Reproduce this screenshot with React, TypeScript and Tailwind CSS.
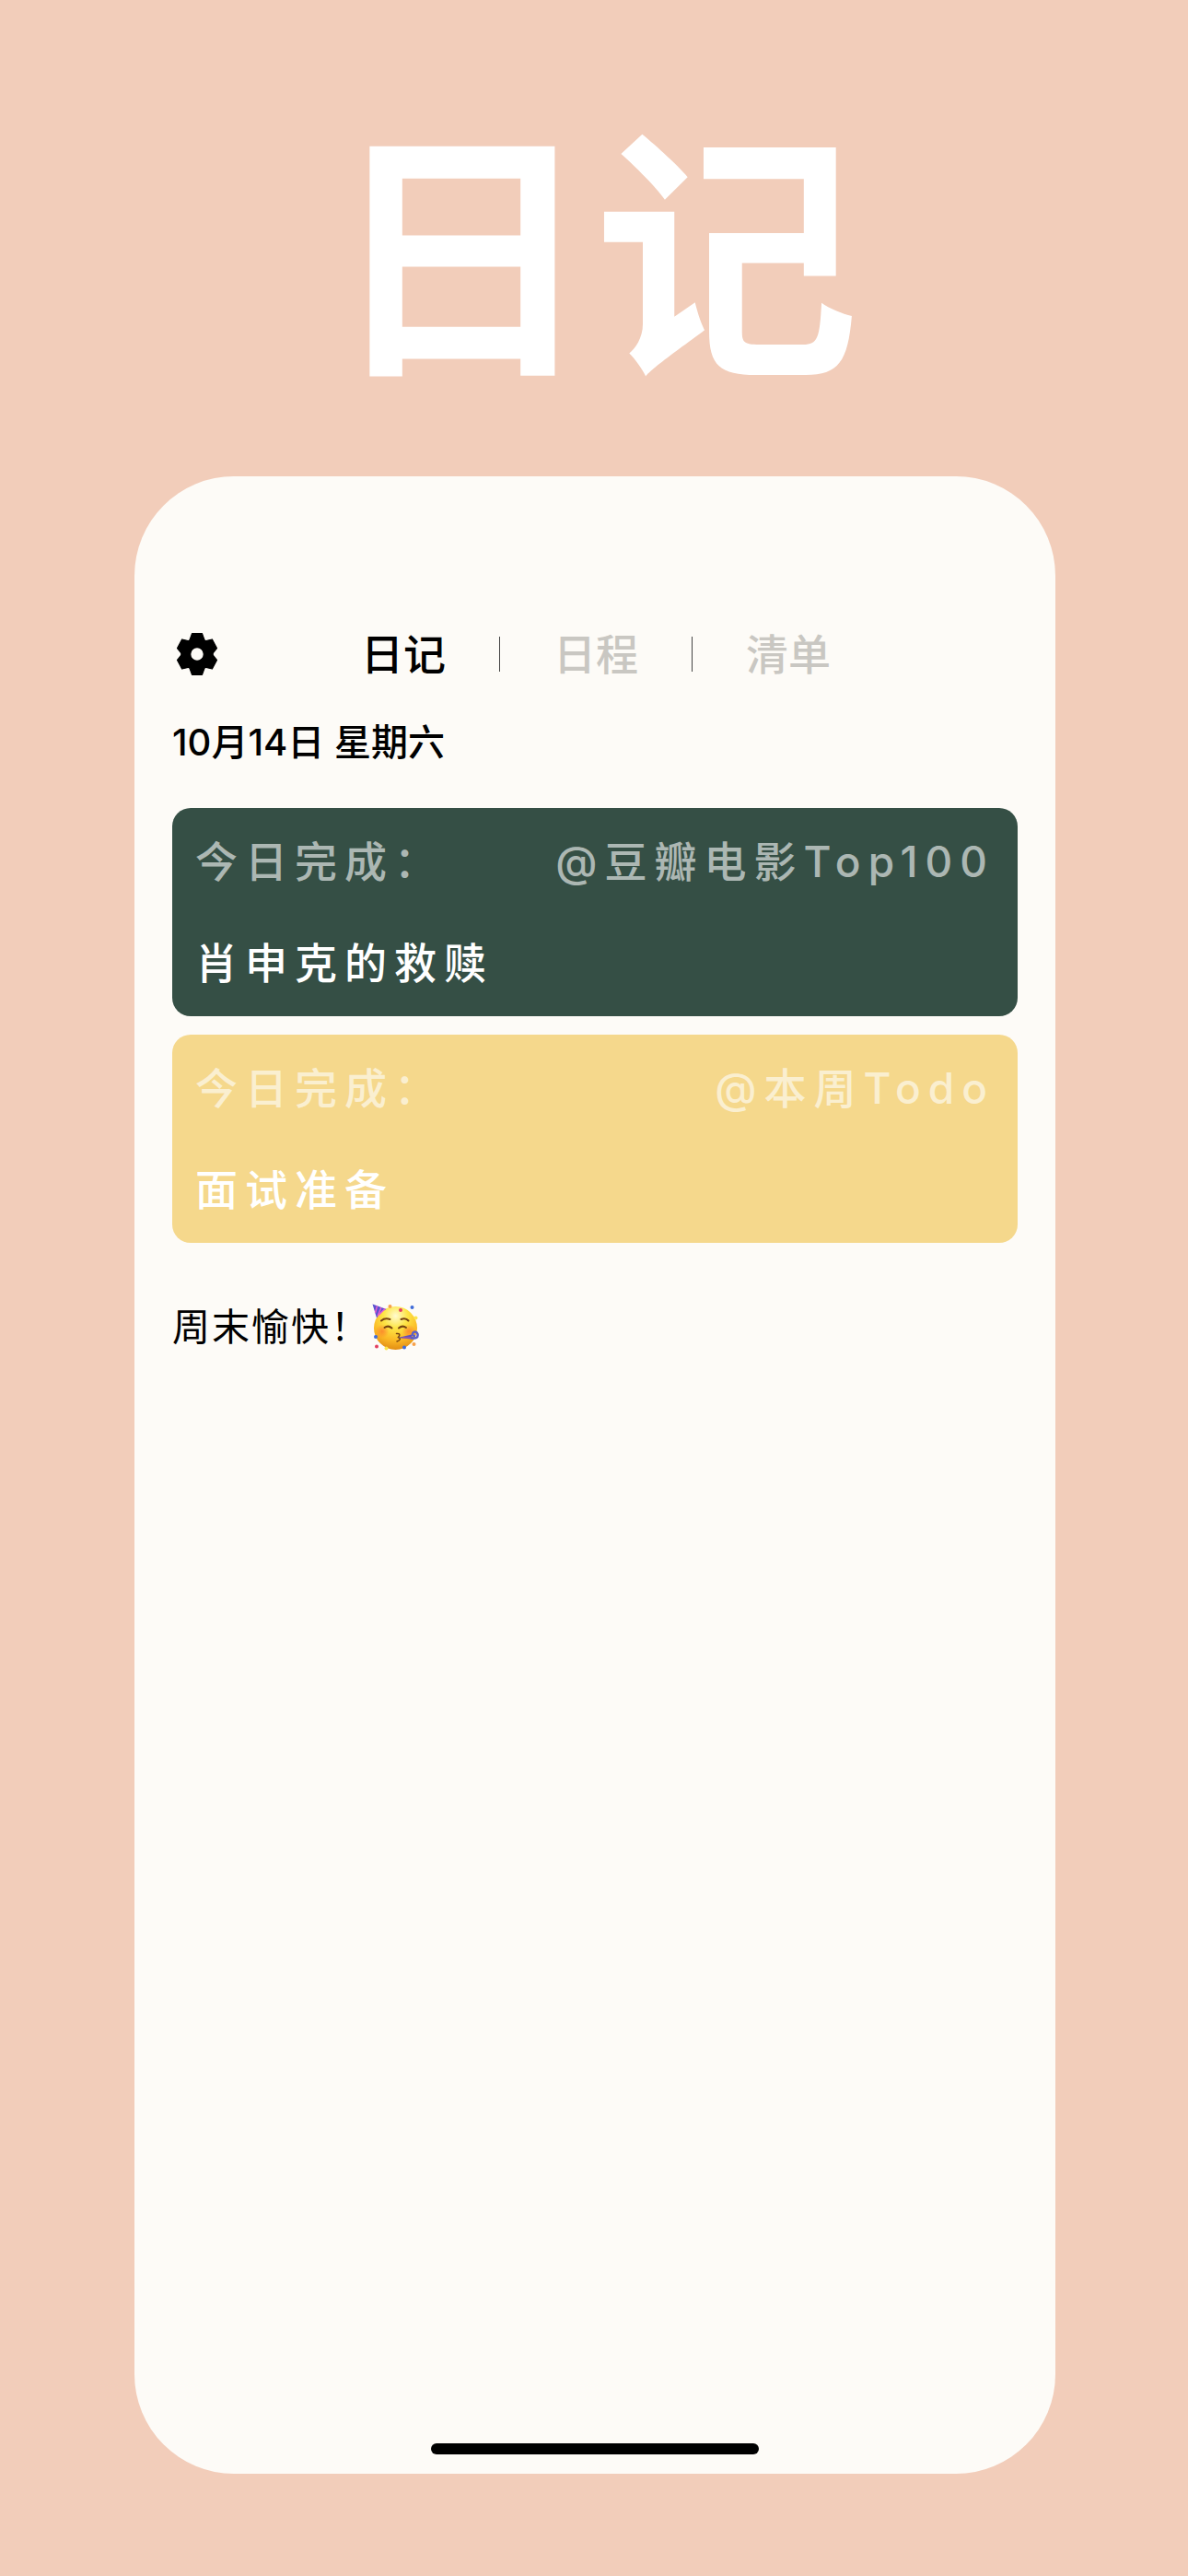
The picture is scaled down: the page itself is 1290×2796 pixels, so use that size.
import { useState } from 'react';

const TABS = ['日记', '日程', '清单'];

const ENTRIES = [
  { title: '肖申克的救赎', list: '@豆瓣电影Top100', color: 'bg-[#354f45]' },
  { title: '面试准备', list: '@本周Todo', color: 'bg-[#f5d88c]' },
];

function GearIcon() {
  return (
    <svg viewBox="-75 -75 150 150" className="size-12" aria-hidden="true">
      <path
        fillRule="evenodd"
        stroke="currentColor"
        strokeWidth="4"
        strokeLinejoin="round"
        fill="currentColor"
        d="M-17-70H17L25-48Q27-44 31-45L51-50L67-20L55-5Q51 0 55 5L67 20L51 50L31 45Q27 44 25 48L17 70H-17L-25 48Q-27 44-31 45L-51 50L-67 20L-55 5Q-51 0-55-5L-67-20L-51-50L-31-45Q-27-44-25-48ZM0-23A23 23 0 1 0 0 23A23 23 0 1 0 0-23Z"
      />
    </svg>
  );
}

function PartyFace() {
  return (
    <svg viewBox="0 0 102 102" className="size-[51px]" role="img" aria-label="🥳">
      <defs>
        <radialGradient id="face" cx="50%" cy="22%" r="80%">
          <stop offset="0%" stopColor="#fffbd0" />
          <stop offset="35%" stopColor="#fde545" />
          <stop offset="70%" stopColor="#fbb825" />
          <stop offset="100%" stopColor="#e08a12" />
        </radialGradient>
        <radialGradient id="cheek">
          <stop offset="0%" stopColor="#fb7a2c" stopOpacity="0.75" />
          <stop offset="100%" stopColor="#fb7a2c" stopOpacity="0" />
        </radialGradient>
      </defs>
      <circle cx="51" cy="53" r="47" fill="url(#face)" />
      <circle cx="22" cy="60" r="15" fill="url(#cheek)" />
      <circle cx="80" cy="60" r="15" fill="url(#cheek)" />
      <path d="M1 1L31 12Q18 18 10 31Z" fill="#5b51cf" />
      <path d="M11 5L7 20M20 8L12 27M28 11L15 24" stroke="#e35fd0" strokeWidth="3" />
      <g fill="none" stroke="#774410" strokeWidth="4" strokeLinecap="round">
        <path d="M20 37Q28 30 39 34" />
        <path d="M63 34Q73 30 79 37" />
        <path d="M27 52Q35 46 43 53" />
        <path d="M58 53Q66 46 74 52" />
        <path d="M53 65Q64 64 57 73Q66 77 54 82" strokeWidth="3" />
      </g>
      <path d="M56 74L86 67V77Z" fill="#5a4fc4" />
      <path d="M84 74Q101 78 99 66Q96 58 89 63Q85 70 94 70" fill="none" stroke="#5b5fc9" strokeWidth="5" />
      <path d="M66 74H84" stroke="#c75b86" strokeWidth="2" />
      <g>
        <circle cx="62" cy="14" r="4" fill="#e3405f" />
        <circle cx="39" cy="6" r="4" fill="#f6a14b" />
        <circle cx="87" cy="8" r="4" fill="#3f6bd8" />
        <circle cx="95" cy="31" r="4" fill="#fbe54d" />
        <circle cx="8" cy="72" r="4" fill="#3f6bd8" />
        <circle cx="10" cy="93" r="4" fill="#e3405f" />
        <circle cx="31" cy="97" r="4" fill="#fbe54d" />
        <circle cx="70" cy="95" r="4" fill="#3f6bd8" />
        <circle cx="91" cy="88" r="4" fill="#f6a14b" />
      </g>
    </svg>
  );
}

export default function App() {
  const [tab, setTab] = useState('日记');

  return (
    <div className="min-h-screen flex flex-col bg-[#f2cdba] text-black font-['Inter','Noto_Sans_CJK_SC',sans-serif]">
      <h1 className="pt-[121px] text-center text-[288px] leading-[320px] font-bold text-white">日记</h1>

      <main className="flex-1 flex flex-col mt-[76px] ml-[146px] mr-[144px] mb-[111px] px-[41px] pt-[161px] pb-[21px] rounded-[108px] bg-[#fdfbf7]">
        <header className="grid grid-cols-[1fr_auto_1fr] items-center h-16">
          <button aria-label="设置" className="justify-self-start ml-[3px]"><GearIcon /></button>
          <nav className="flex items-center gap-[58px] ml-0.5">
            {TABS.map((t, i) => (
              <div key={t} className="flex items-center gap-[58px]">
                {i > 0 && <span className="w-px h-[38px] bg-[#444444]" />}
                <button onClick={() => setTab(t)} className={`text-[46px] leading-[64px] font-medium ${tab === t ? 'text-black' : 'text-[#c9c7c2]'}`}>{t}</button>
              </div>
            ))}
          </nav>
        </header>

        <h2 className="mt-[34px] text-[40px] leading-[60px] font-medium">10月14日 星期六</h2>

        <section className="mt-[41px] flex flex-col gap-5">
          {ENTRIES.map(e => (
            <article key={e.title} className={`${e.color} rounded-[20px] px-[25px] py-[26px] text-[46px] leading-[64px] tracking-[8px] font-medium text-white`}>
              <div className="flex justify-between text-white/60">
                <span>今日完成：</span>
                <span>{e.list}</span>
              </div>
              <h3 className="mt-[46px]">{e.title}</h3>
            </article>
          ))}
        </section>

        <p className="mt-[61px] flex items-center gap-0.5 text-[41px] leading-[60px] tracking-[2px]">周末愉快！<PartyFace /></p>

        <div className="mt-auto self-center w-[356px] h-3 rounded-full bg-black" />
      </main>
    </div>
  );
}
